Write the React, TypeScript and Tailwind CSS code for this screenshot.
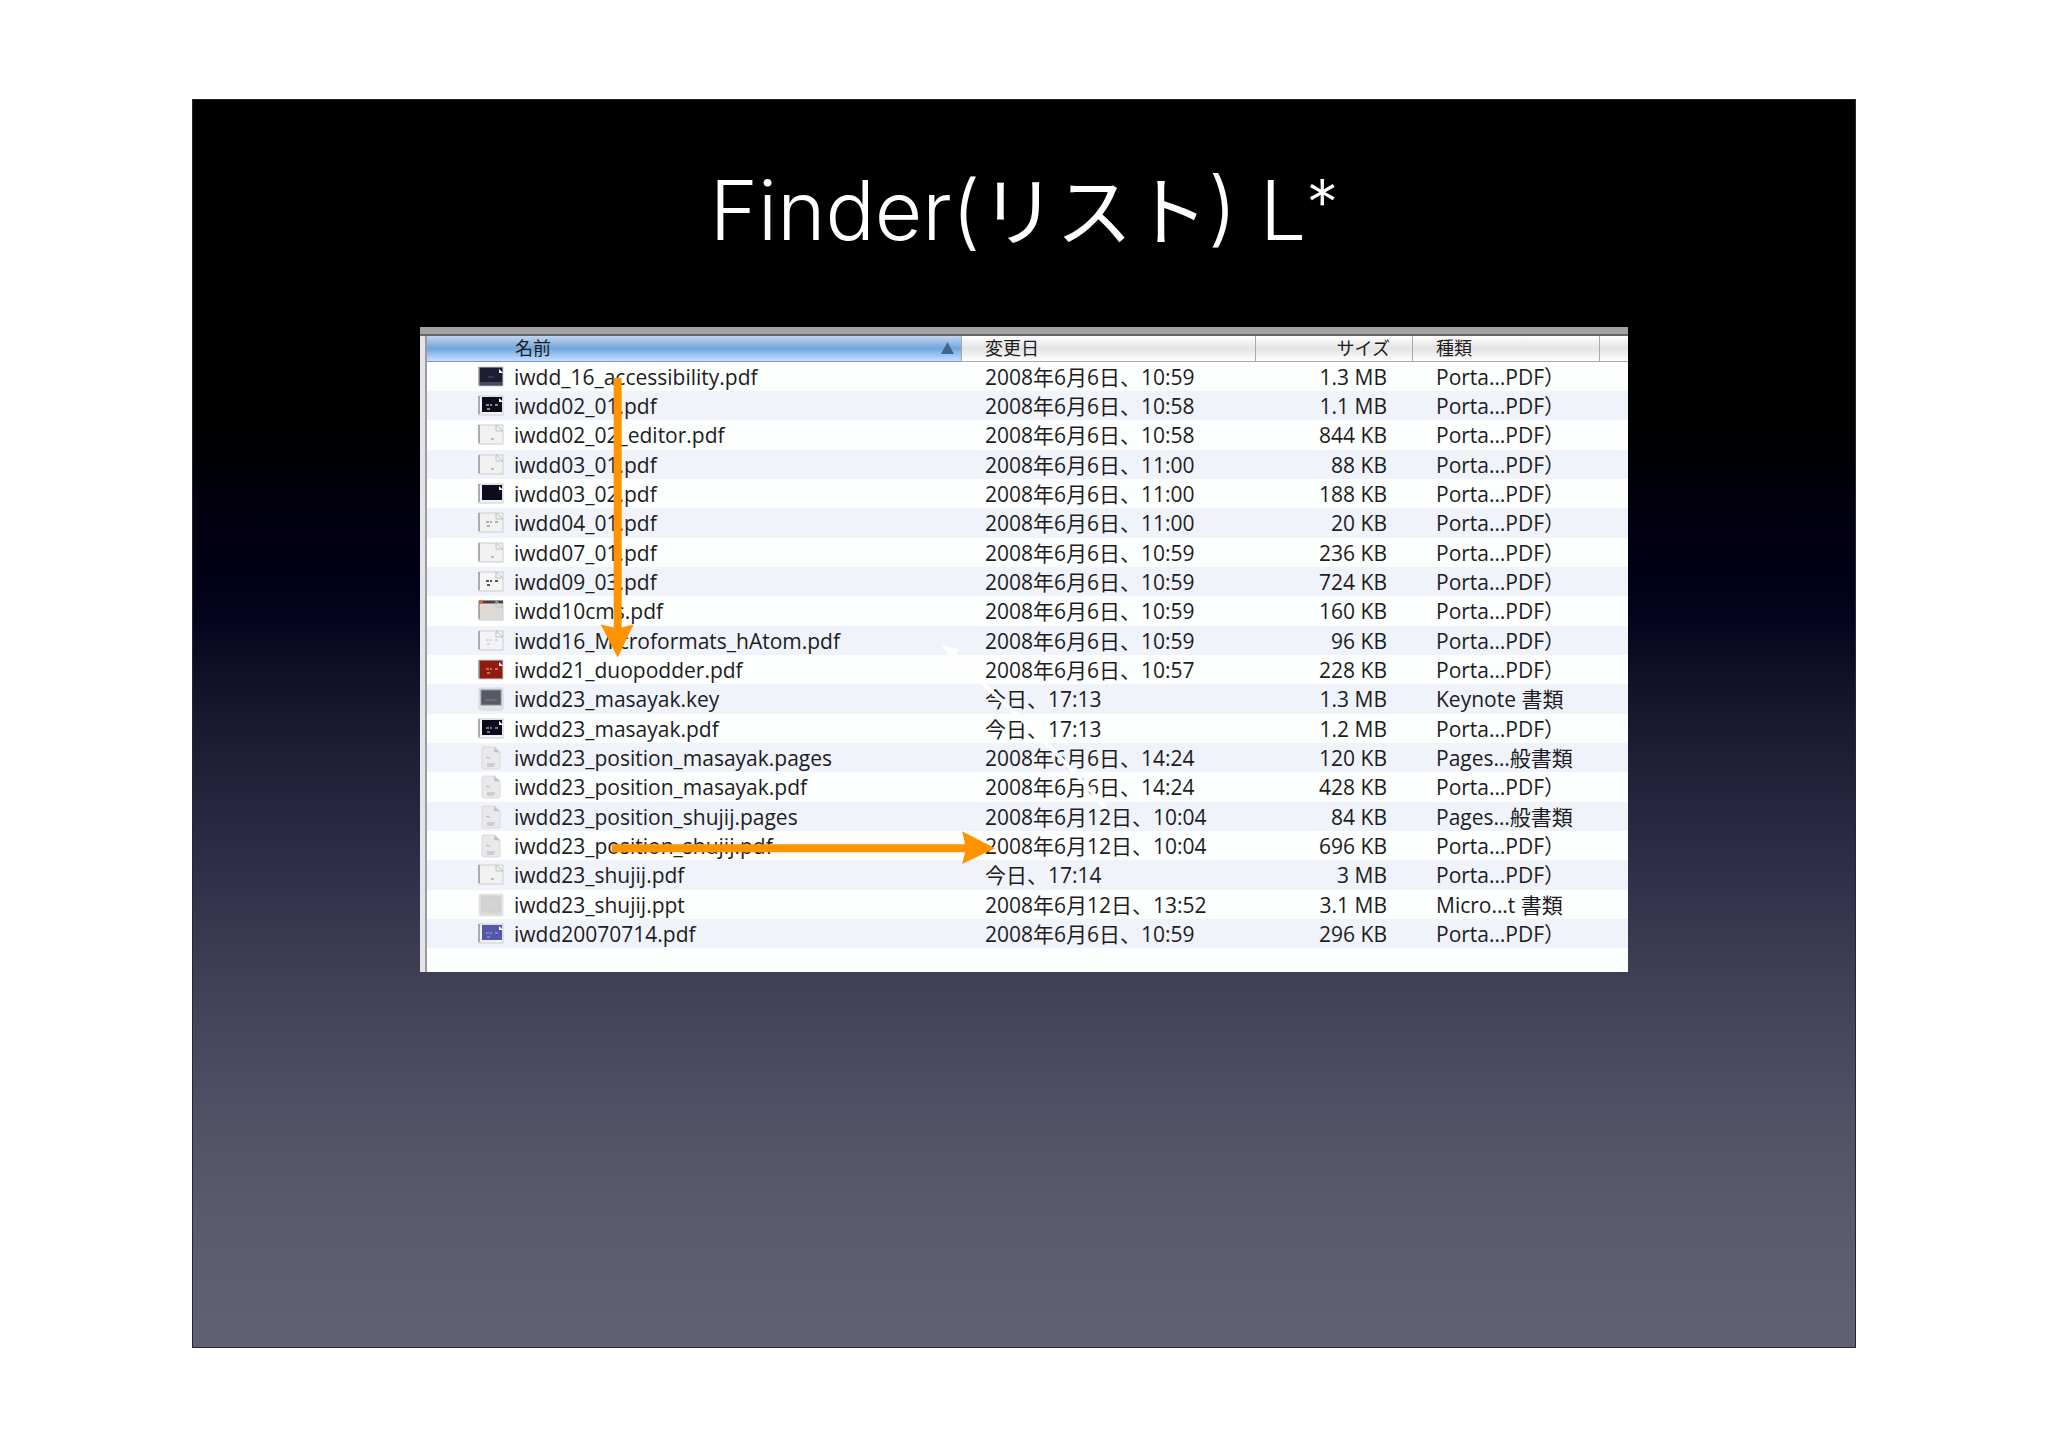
import React from 'react';
import clsx from 'clsx';

type IconKind = 'slide' | 'page' | 'keynote' | 'ppt';

interface FileRow {
  name: string;
  date: string;
  size: string;
  kind: string;
  icon: IconKind;
  fill?: string;
  ink?: string;
  framed?: boolean;
}

const PDF = 'Porta…PDF）';

const files: FileRow[] = [
  { name: 'iwdd_16_accessibility.pdf', date: '2008年6月6日、10:59', size: '1.3 MB', kind: PDF, icon: 'slide', fill: '#1d1d33' },
  { name: 'iwdd02_01.pdf', date: '2008年6月6日、10:58', size: '1.1 MB', kind: PDF, icon: 'slide', fill: '#0b0b1c', ink: '#b5b5c2', framed: true },
  { name: 'iwdd02_02_editor.pdf', date: '2008年6月6日、10:58', size: '844 KB', kind: PDF, icon: 'slide', fill: '#f1f1f1' },
  { name: 'iwdd03_01.pdf', date: '2008年6月6日、11:00', size: '88 KB', kind: PDF, icon: 'slide', fill: '#f1f1f1' },
  { name: 'iwdd03_02.pdf', date: '2008年6月6日、11:00', size: '188 KB', kind: PDF, icon: 'slide', fill: '#0b0b1c', framed: true },
  { name: 'iwdd04_01.pdf', date: '2008年6月6日、11:00', size: '20 KB', kind: PDF, icon: 'slide', fill: '#f1f1f1', ink: '#999999' },
  { name: 'iwdd07_01.pdf', date: '2008年6月6日、10:59', size: '236 KB', kind: PDF, icon: 'slide', fill: '#f1f1f1' },
  { name: 'iwdd09_03.pdf', date: '2008年6月6日、10:59', size: '724 KB', kind: PDF, icon: 'slide', fill: '#f5f5f5', ink: '#222222' },
  { name: 'iwdd10cms.pdf', date: '2008年6月6日、10:59', size: '160 KB', kind: PDF, icon: 'slide', fill: '#dedbd6' },
  { name: 'iwdd16_Microformats_hAtom.pdf', date: '2008年6月6日、10:59', size: '96 KB', kind: PDF, icon: 'slide', fill: '#f4f4f6', ink: '#d0d0d4' },
  { name: 'iwdd21_duopodder.pdf', date: '2008年6月6日、10:57', size: '228 KB', kind: PDF, icon: 'slide', fill: '#8f1c10', ink: '#d98a76' },
  { name: 'iwdd23_masayak.key', date: '今日、17:13', size: '1.3 MB', kind: 'Keynote 書類', icon: 'keynote' },
  { name: 'iwdd23_masayak.pdf', date: '今日、17:13', size: '1.2 MB', kind: PDF, icon: 'slide', fill: '#0b0b1c', ink: '#9a9ab0', framed: true },
  { name: 'iwdd23_position_masayak.pages', date: '2008年6月6日、14:24', size: '120 KB', kind: 'Pages…般書類', icon: 'page' },
  { name: 'iwdd23_position_masayak.pdf', date: '2008年6月6日、14:24', size: '428 KB', kind: PDF, icon: 'page' },
  { name: 'iwdd23_position_shujij.pages', date: '2008年6月12日、10:04', size: '84 KB', kind: 'Pages…般書類', icon: 'page' },
  { name: 'iwdd23_position_shujij.pdf', date: '2008年6月12日、10:04', size: '696 KB', kind: PDF, icon: 'page' },
  { name: 'iwdd23_shujij.pdf', date: '今日、17:14', size: '3 MB', kind: PDF, icon: 'slide', fill: '#f1f1f1' },
  { name: 'iwdd23_shujij.ppt', date: '2008年6月12日、13:52', size: '3.1 MB', kind: 'Micro…t 書類', icon: 'ppt' },
  { name: 'iwdd20070714.pdf', date: '2008年6月6日、10:59', size: '296 KB', kind: PDF, icon: 'slide', fill: '#5558a8', ink: '#8d90d6', framed: true },
];

const FileIcon: React.FC<{ file: FileRow }> = ({ file }) => {
  const { icon, fill = '#f1f1f1', ink, framed } = file;

  if (icon === 'keynote') {
    return (
      <svg className="w-[26px] h-6 block" viewBox="0 0 26 24" aria-hidden="true">
        <rect x="1" y="1" width="24" height="22" rx="2" fill="#e3e3e6" stroke="#d6d6da" />
        <rect x="3" y="3" width="20" height="15" fill="#555a64" stroke="#8a8d94" />
        <path d="M7 13h12" stroke="#7c828c" />
      </svg>
    );
  }

  if (icon === 'ppt') {
    return (
      <svg className="w-[26px] h-6 block" viewBox="0 0 26 24" aria-hidden="true">
        <rect x="1" y="1" width="24" height="22" rx="1" fill="#dcdcdc" stroke="#e9e9e9" />
        <path d="M4 4h18v15H4z" fill="#d3d3d3" stroke="#cacaca" />
      </svg>
    );
  }

  if (icon === 'page') {
    return (
      <svg className="w-[26px] h-6 block" viewBox="0 0 26 24" aria-hidden="true">
        <path d="M4 3q0-2 2-2h11l5 5v15q0 2-2 2H6q-2 0-2-2z" fill="#e9e9eb" stroke="#dadade" />
        <path d="M16 1q1 4 0 5 4 0 6 1z" fill="#bdbdc2" />
        <path d="M8 12l2-1 2 2M9 18h8M9 20h7" stroke="#b3b3b8" fill="none" />
      </svg>
    );
  }

  return (
    <svg className="w-[26px] h-6 block" viewBox="0 0 26 24" aria-hidden="true">
      <rect x="1" y="2" width="24" height="19" fill={framed ? '#f3f3f5' : fill} stroke="#cdcdd0" />
      <path d="M1 2v18" stroke="#77777c" />
      {framed && <rect x="4" y="3" width="20" height="15" fill={fill} />}
      {file.name === 'iwdd10cms.pdf' && <path d="M1 3h24" stroke="#4a3f3a" strokeWidth="3" />}
      {file.name === 'iwdd10cms.pdf' && <path d="M1 3h4" stroke="#e2622a" strokeWidth="3" />}
      {fill.startsWith('#f') || fill.startsWith('#d') ? (
        <path d="M18 2v6h7M18 2l7 6" fill="none" stroke="#bfbfc4" />
      ) : (
        <path d="M21 4v4h4z" fill="#ffffff" />
      )}
      {ink && <path d="M8 11h6M17 11h3M9 15h3" stroke={ink} strokeWidth="1.5" strokeDasharray="3 1" />}
      {!ink && fill === '#f1f1f1' && <path d="M13 16h3" stroke="#8a8a8a" />}
      {fill === '#1d1d33' && <path d="M2 17h22v3H2z" fill="#4a4a60" />}
      {fill === '#1d1d33' && <path d="M10 12h6" stroke="#55556c" />}
    </svg>
  );
};

interface HeaderCellProps {
  children?: React.ReactNode;
  className?: string;
  sorted?: boolean;
}

const HeaderCell: React.FC<HeaderCellProps> = ({ children, className, sorted }) => (
  <th
    scope="col"
    aria-sort={sorted ? 'ascending' : undefined}
    className={clsx(
      'h-[26px] p-0 pb-[2px] font-normal text-[18px] leading-[22px] border-b bg-linear-to-b',
      sorted
        ? 'border-b-[#7f8fd0] from-[#c3d5ee] via-[#72a5dc] to-[#c4e0ff]'
        : 'border-l border-l-[#a9a9a9] border-b-[#a9a9a9] from-white via-[#e3e3e3] to-white',
      className
    )}
  >
    {children}
  </th>
);

// Orange arrows drawn over the list, with a thin white one behind them
const Arrows: React.FC = () => (
  <svg className="absolute inset-0 w-full h-full pointer-events-none" viewBox="0 0 1210 643" preserveAspectRatio="xMinYMin meet" aria-hidden="true">
    <path d="M534 326L566 358Q640 425 686 480" fill="none" stroke="#ffffff" strokeWidth="4" />
    <path d="M523 317l17 5-9 11z" fill="#ffffff" />
    <g fill="#ff9300">
      <path d="M194 50h8v250l12-3-16 33-17-33 13 3z" />
      <path d="M192 517h354l-3-13 33 17-33 16 3-12H192z" />
    </g>
  </svg>
);

const FileList: React.FC = () => (
  <div className="relative mx-[227px] border-t border-[#a3a3a3] bg-[#fdfffe]">
    <div className="h-[8px] bg-[#a3a3a3] border-b-2 border-[#66666e]" />
    <div className="flex">
      <div className="w-[7px] shrink-0 bg-[#e4e4e8] border-r-2 border-[#9a9aa2]" />
      <table className="w-full table-fixed border-separate border-spacing-0 text-left">
        <colgroup>
          <col />
          <col className="w-[294px]" />
          <col className="w-[157px]" />
          <col className="w-[187px]" />
          <col className="w-[29px]" />
        </colgroup>
        <thead>
          <tr>
            <HeaderCell sorted>
              <button type="button" className="flex w-full items-center justify-between pl-[88px] pr-[7px]">
                名前
                <svg className="w-[13px] h-[12px]" viewBox="0 0 13 12" aria-hidden="true">
                  <path d="M6.500 0L13 12H0z" fill="#3f6590" />
                </svg>
              </button>
            </HeaderCell>
            <HeaderCell className="pl-[23px]">変更日</HeaderCell>
            <HeaderCell className="pr-[22px] text-right">サイズ</HeaderCell>
            <HeaderCell className="pl-[23px]">種類</HeaderCell>
            <HeaderCell />
          </tr>
        </thead>
        <tbody>
          {files.map((file) => (
            <tr key={file.name} className="h-[29px] nth-[3n]:h-[30px] even:bg-[#f0f3fa]">
              <td className="p-0 pl-[51px]">
                <div className="flex items-center gap-[10px]">
                  <FileIcon file={file} />
                  {file.name}
                </div>
              </td>
              <td className="p-0 pl-6">{file.date}</td>
              <td className="p-0 pr-[25px] text-right">{file.size}</td>
              <td className="p-0 pl-6">{file.kind}</td>
              <td className="p-0" />
            </tr>
          ))}
        </tbody>
      </table>
    </div>
    <div className="h-6 border-l-[5px] border-[#e4e4e8]">
      <div className="h-full border-l-2 border-[#9a9aa2]" />
    </div>
    <Arrows />
  </div>
);

const App: React.FC = () => {
  return (
    <main className="bg-white px-48 py-[99px]">
      <section className="aspect-[1664/1249] border border-[#26262e] bg-[linear-gradient(#000000_26%,#020018_38%,#05051f_42%,#17172e_49%,#262640_57%,#33334d_64%,#424056_71%,#504e64_80%,#5a5a6c_89%,#626173)]">
        <h1 className="h-[227px] pt-[51px] text-center text-white font-light text-[82px] leading-[120px] font-['Inter','Noto_Sans_CJK_JP',sans-serif]">
          Finder(<span className="text-[76px] leading-none font-normal">リスト</span>) L
          <span className="text-[64px] leading-none align-[14px]">*</span>
        </h1>
        <div className="text-[21px] leading-[28px] whitespace-nowrap text-[#1c1c22] font-['Open_Sans','Noto_Sans_CJK_JP',sans-serif]">
          <FileList />
        </div>
      </section>
    </main>
  );
};

export default App;
